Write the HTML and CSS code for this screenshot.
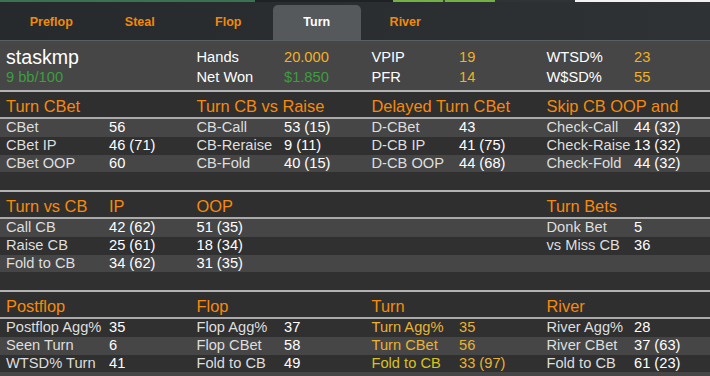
FILE: index.html
```html
<!DOCTYPE html>
<html lang="en">
<head>
    <meta charset="UTF-8">
    <meta name="viewport" content="width=device-width, initial-scale=1.0">
    <title>Turn Stats</title>
    <link rel="stylesheet" href="styles.css">
</head>
<body>
    <div class="topstrip">
        <span class="strip-green"></span>
        <span class="strip-dark"></span>
        <span class="strip-lime"></span>
        <span class="strip-gap"></span>
        <span class="strip-lime"></span>
        <span class="strip-dark2"></span>
        <span class="strip-white"></span>
    </div>

    <nav class="tabs">
        <a class="tab">Preflop</a>
        <a class="tab">Steal</a>
        <a class="tab">Flop</a>
        <a class="tab active">Turn</a>
        <a class="tab">River</a>
    </nav>

    <div class="panel">
        <div class="summary">
            <span class="player">staskmp</span>
            <span class="lbl r1 c3">Hands</span>
            <span class="gold r1 c4">20.000</span>
            <span class="lbl r1 c5">VPIP</span>
            <span class="gold r1 c6">19</span>
            <span class="lbl r1 c7">WTSD%</span>
            <span class="gold r1 c8">23</span>
            <span class="green r2 c1">9 bb/100</span>
            <span class="lbl r2 c3">Net Won</span>
            <span class="green r2 c4">$1.850</span>
            <span class="lbl r2 c5">PFR</span>
            <span class="gold r2 c6">14</span>
            <span class="lbl r2 c7">W$SD%</span>
            <span class="gold r2 c8">55</span>
        </div>

        <section class="block">
            <div class="block-head grid">
                <span>Turn CBet</span><span></span>
                <span>Turn CB vs Raise</span><span></span>
                <span>Delayed Turn CBet</span><span></span>
                <span>Skip CB OOP and</span><span></span>
            </div>
            <div class="row light grid">
                <span>CBet</span><b>56</b>
                <span>CB-Call</span><b>53 (15)</b>
                <span>D-CBet</span><b>43</b>
                <span>Check-Call</span><b>44 (32)</b>
            </div>
            <div class="row dark grid">
                <span>CBet IP</span><b>46 (71)</b>
                <span>CB-Reraise</span><b>9 (11)</b>
                <span>D-CB IP</span><b>41 (75)</b>
                <span>Check-Raise</span><b>13 (32)</b>
            </div>
            <div class="row light grid">
                <span>CBet OOP</span><b>60</b>
                <span>CB-Fold</span><b>40 (15)</b>
                <span>D-CB OOP</span><b>44 (68)</b>
                <span>Check-Fold</span><b>44 (32)</b>
            </div>
            <div class="row dark grid"></div>
        </section>

        <section class="block">
            <div class="block-head grid">
                <span>Turn vs CB</span><span>IP</span>
                <span>OOP</span><span></span>
                <span></span><span></span>
                <span>Turn Bets</span><span></span>
            </div>
            <div class="row light grid">
                <span>Call CB</span><b>42 (62)</b>
                <b>51 (35)</b><span></span>
                <span></span><span></span>
                <span>Donk Bet</span><b>5</b>
            </div>
            <div class="row dark grid">
                <span>Raise CB</span><b>25 (61)</b>
                <b>18 (34)</b><span></span>
                <span></span><span></span>
                <span>vs Miss CB</span><b>36</b>
            </div>
            <div class="row light grid">
                <span>Fold to CB</span><b>34 (62)</b>
                <b>31 (35)</b><span></span>
            </div>
            <div class="row dark grid"></div>
        </section>

        <section class="block">
            <div class="block-head grid">
                <span>Postflop</span><span></span>
                <span>Flop</span><span></span>
                <span>Turn</span><span></span>
                <span>River</span><span></span>
            </div>
            <div class="row dark grid">
                <span>Postflop Agg%</span><b>35</b>
                <span>Flop Agg%</span><b>37</b>
                <span class="hl">Turn Agg%</span><b class="hl">35</b>
                <span>River Agg%</span><b>28</b>
            </div>
            <div class="row light grid">
                <span>Seen Turn</span><b>6</b>
                <span>Flop CBet</span><b>58</b>
                <span class="hl">Turn CBet</span><b class="hl">56</b>
                <span>River CBet</span><b>37 (63)</b>
            </div>
            <div class="row dark grid">
                <span>WTSD% Turn</span><b>41</b>
                <span>Fold to CB</span><b>49</b>
                <span class="hl2">Fold to CB</span><b class="hl">33 (97)</b>
                <span>Fold to CB</span><b>61 (23)</b>
            </div>
            <div class="row light grid"></div>
        </section>
    </div>
</body>
</html>
```

FILE: styles.css
```css
body {
    margin: 0;
    padding: 0;
    background: #2f2f2f;
    font-family: "Liberation Sans", Arial, sans-serif;
    font-size: 14.67px;
    color: #e2e2e2;
    overflow: hidden;
}

/* thin strip of the window behind */
.topstrip {
    display: flex;
    height: 2px;
    background: #24272a;
}
.strip-green { width: 255px; background: #3a7352; }
.strip-dark { width: 138px; background: #1f2224; }
.strip-lime { width: 50px; background: #74b043; }
.strip-gap { width: 2px; background: #3c4a30; }
.strip-dark2 { width: 80px; background: #303234; }
.strip-white { flex: 1; background: #f2f2f2; }

.tabs {
    display: flex;
    align-items: flex-end;
    height: 38px;
    padding-left: 7px;
    background: linear-gradient(to right, #272a2d, #2f3235);
}
.tab {
    width: 88.5px;
    height: 35px;
    line-height: 35px;
    text-align: center;
    font-size: 12.5px;
    font-weight: bold;
    color: #f08a0a;
    border-radius: 5px 5px 0 0;
}
.tab.active {
    background: #55595c;
    color: #fff;
}

.panel {
    border-top: 1px solid #5b5f62;
}

.summary,
.grid {
    display: grid;
    grid-template-columns: 103px repeat(6, 87.5px) 1fr;
    padding-left: 6px;
    white-space: nowrap;
}

.summary {
    height: 43px;
    padding-top: 6px;
    grid-template-rows: 20px 20px;
    align-items: center;
    background: #464646;
}
.summary .lbl { color: #fff; }
.player {
    grid-row: 1;
    grid-column: 1 / 3;
    font-size: 19.6px;
    color: #fff;
}
.r1 { grid-row: 1; }
.r2 { grid-row: 2; }
.c1 { grid-column: 1; }
.c3 { grid-column: 3; }
.c4 { grid-column: 4; }
.c5 { grid-column: 5; }
.c6 { grid-column: 6; }
.c7 { grid-column: 7; }
.c8 { grid-column: 8; }
.gold { color: #f2b11e; }
.green { color: #3d9e3d; }

.block {
    border-top: 2px solid #b3b3b3;
}
.block-head {
    height: 25px;
    line-height: 28px;
    font-size: 16.4px;
    color: #f58a0c;
    background: #2f2f2f;
    border-bottom: 2px solid #aaaaaa;
}

.row {
    height: 17.75px;
    line-height: 17.75px;
    align-items: center;
}
.row span { color: #dedede; }
.row b {
    font-weight: normal;
    color: #fff;
}
.light { background: #464646; }
.dark { background: #303030; }

.row .hl { color: #e8b232; }
.row .hl2 { color: #d9c21c; }
```
